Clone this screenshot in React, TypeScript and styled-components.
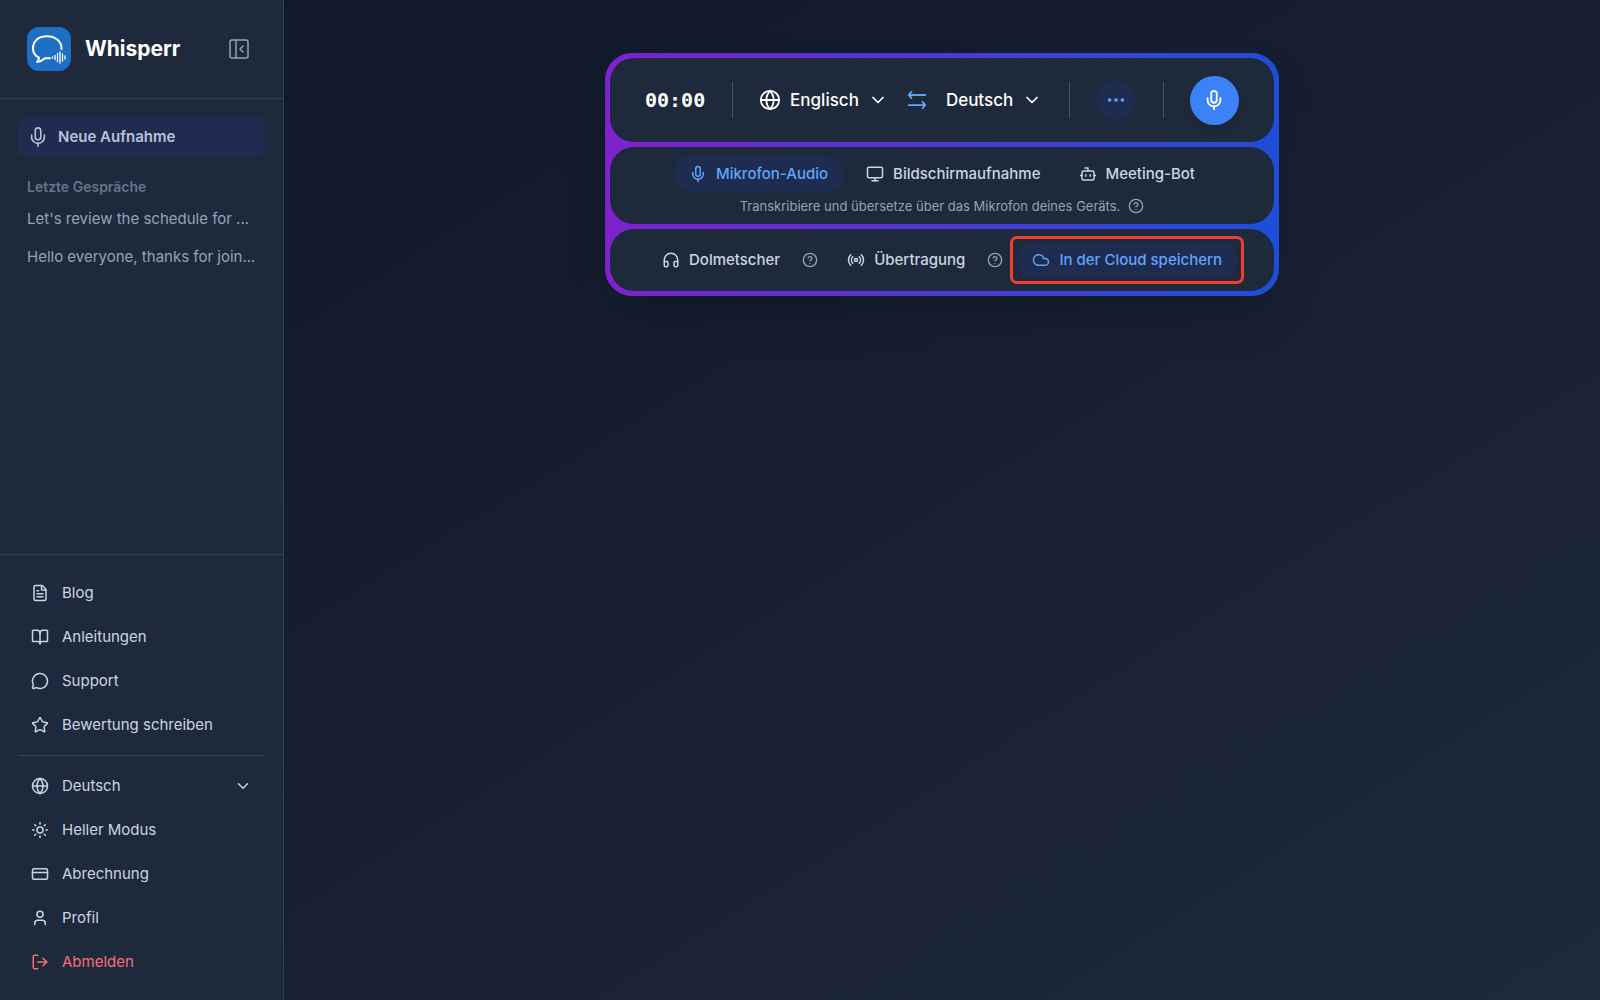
import React from "react";
import styled, { createGlobalStyle, css } from "styled-components";
import {
  BookOpen, Bot, ChevronDown, CircleHelp, Cloud, CreditCard, Ellipsis,
  FileText, Globe, Headphones, LogOut, MessageCircle, Mic, Monitor, PanelLeftClose, Radio, Star, Sun, User,
} from "lucide-react";

const GlobalStyle = createGlobalStyle`
  *, *::before, *::after { box-sizing: border-box; }
  body {
    margin: 0;
    font-family: Inter, "Liberation Sans", sans-serif;
    font-size: 15px;
    line-height: 24px;
    color: #cbd5e1;
    background: #0f172a;
  }
  button { font: inherit; color: inherit; background: none; border: 0; padding: 0; cursor: pointer; }
  a { color: inherit; text-decoration: none; }
  h1, h2, p, ul { margin: 0; padding: 0; }
  ul { list-style: none; }
  svg { flex-shrink: 0; display: block; }
`;

const Page = styled.div`
  display: flex;
  min-height: 100vh;
  background: linear-gradient(to bottom right, #0f172a, #1e293b);
`;

const Sidebar = styled.aside`
  display: flex;
  flex-direction: column;
  flex: 0 0 284px;
  min-width: 0;
  background: #1e293b;
  border-right: 1px solid #334155;
`;

const Brand = styled.header`
  display: flex;
  align-items: center;
  height: 99px;
  padding: 0 32px 0 27px;
  border-bottom: 1px solid #334155;
`;

const BrandName = styled.h1`
  flex: 1;
  margin-left: 14px;
  font-size: 21px;
  line-height: 32px;
  font-weight: 700;
  color: #fff;
`;

const CollapseButton = styled.button`
  color: #94a3b8;
`;

const Recent = styled.div`
  flex: 1;
  padding: 18px;
`;

const NewRecording = styled.button`
  display: flex;
  align-items: center;
  gap: 9px;
  width: 100%;
  height: 40px;
  padding: 0 9px;
  border-radius: 8px;
  background: #232a50;
  color: #b4c3dc;
  font-weight: 600;
`;

const RecentTitle = styled.h2`
  padding: 20px 9px 3px;
  font-size: 14px;
  line-height: 20px;
  font-weight: 600;
  color: #64748b;
`;

const RecentLink = styled.a`
  display: block;
  padding: 7px 9px;
  overflow: hidden;
  text-overflow: ellipsis;
  white-space: nowrap;
  color: #94a3b8;
`;

const Footer = styled.nav`
  padding: 16px 18px;
  border-top: 1px solid #334155;
`;

const Rule = styled.hr`
  height: 1px;
  margin: 8px 0;
  border: 0;
  background: #334155;
`;

const footerItem = css<{ $danger?: boolean }>`
  display: flex;
  align-items: center;
  gap: 13px;
  width: 100%;
  height: 44px;
  padding: 0 13px;
  text-align: left;
  color: ${(p) => (p.$danger ? "#f87171" : "#cbd5e1")};
`;
const FooterLink = styled.a<{ $danger?: boolean }>`${footerItem}`;
const FooterButton = styled.button<{ $danger?: boolean }>`${footerItem}`;

const Grow = styled.span`
  flex: 1;
`;

const Main = styled.main`
  flex: 1;
  display: flex;
  justify-content: center;
  align-items: flex-start;
  padding: 53px 24px;
`;

const Recorder = styled.section`
  display: grid;
  gap: 5px;
  width: 100%;
  max-width: 674px;
  padding: 5px;
  border-radius: 27px;
  background: linear-gradient(to right, #7e22ce, #1d4ed8);
  box-shadow: 0 24px 48px -12px rgba(0, 0, 0, 0.25);
`;

const Panel = styled.div`
  display: flex;
  align-items: center;
  justify-content: center;
  border-radius: 24px;
  background: #1e293b;
`;

const ControlPanel = styled(Panel)`
  justify-content: space-between;
  min-height: 84px;
  padding: 0 35px;
`;

const SourcePanel = styled(Panel)`
  flex-direction: column;
  gap: 4px;
  padding: 9px 16px 8px;
`;

const OptionPanel = styled(Panel)`
  gap: 13px;
  padding: 13px 16px;
`;

const Timer = styled.time`
  font-family: "DejaVu Sans Mono", monospace;
  font-size: 20px;
  font-weight: 700;
  color: #fff;
`;

const Separator = styled.span`
  width: 1px;
  height: 36px;
  background: #475569;
`;

const Languages = styled.div`
  display: flex;
  align-items: center;
  gap: 18px;
`;

const LanguageButton = styled.button`
  display: flex;
  align-items: center;
  gap: 9px;
  font-size: 17px;
  font-weight: 500;
  color: #fff;
`;

const SwapButton = styled.button`
  color: #60a5fa;
`;

const RoundButton = styled.button<{ $primary?: boolean }>`
  display: grid;
  place-items: center;
  width: ${(p) => (p.$primary ? 49 : 40)}px;
  height: ${(p) => (p.$primary ? 49 : 40)}px;
  border-radius: 50%;
  color: ${(p) => (p.$primary ? "#fff" : "#60a5fa")};
  background: ${(p) => (p.$primary ? "#3b82f6" : "#1e2c50")};
  box-shadow: ${(p) => (p.$primary ? "0 4px 10px rgba(0, 0, 0, 0.12)" : "none")};
`;

const PillRow = styled.div`
  display: flex;
  align-items: center;
  gap: 6px;
`;

const Pill = styled.button<{ $active?: boolean }>`
  display: flex;
  align-items: center;
  gap: 9px;
  height: 36px;
  padding: 0 16px;
  border-radius: 18px;
  font-weight: 500;
  white-space: nowrap;
  color: ${(p) => (p.$active ? "#60a5fa" : "#cbd5e1")};
  background: ${(p) => (p.$active ? "#1e2c50" : "transparent")};
`;

const Hint = styled.p`
  display: flex;
  align-items: center;
  gap: 8px;
  font-size: 13px;
  line-height: 20px;
  color: #94a3b8;
`;

const HelpButton = styled.button`
  color: #94a3b8;
`;

const Highlight = styled.div`
  position: relative;

  &::after {
    content: "";
    position: absolute;
    inset: -6px;
    border: 3px solid #f43b30;
    border-radius: 7px;
    pointer-events: none;
  }
`;

function Logo() {
  return (
    <svg width="44" height="44" viewBox="0 0 44 44" fill="none" aria-hidden="true">
      <rect width="44" height="44" rx="12" fill="#1d6fc4" />
      <path
        d="M34.5 22c.3-7-5.500-12.700-14.500-12.700S6 14.500 6 21.300c0 4.300 2.200 7.600 6 9.300-.2 1.800-.9 3.200-2 4.400 3.200-.3 5.800-1.700 8-3.700h5"
        stroke="#fff" strokeWidth="2" strokeLinecap="round" strokeLinejoin="round"
      />
      <path
        d="M25.500 30v1M28 28.500v4M30.500 26.500v8M33 25v11M35.500 27v7M38 29v3"
        stroke="#fff" strokeWidth="1.300" strokeLinecap="round"
      />
    </svg>
  );
}

function SwapIcon() {
  return (
    <svg
      width="22" height="22" viewBox="0 0 24 24" fill="none" stroke="currentColor"
      strokeWidth="2" strokeLinecap="round" strokeLinejoin="round" aria-hidden="true"
    >
      <path d="M6 3 3 6.500l3 3.500M3 6.500h18M18 21l3-3.500-3-3.500M21 17.500H3" />
    </svg>
  );
}

function Help() {
  return <HelpButton aria-label="Hilfe"><CircleHelp size={16} /></HelpButton>;
}

const links = [
  { icon: FileText, label: "Blog" },
  { icon: BookOpen, label: "Anleitungen" },
  { icon: MessageCircle, label: "Support" },
  { icon: Star, label: "Bewertung schreiben" },
];

export default function App() {
  return (
    <Page>
      <GlobalStyle />
      <Sidebar>
        <Brand>
          <Logo />
          <BrandName>Whisperr</BrandName>
          <CollapseButton aria-label="Seitenleiste einklappen"><PanelLeftClose size={24} strokeWidth={1.5} /></CollapseButton>
        </Brand>
        <Recent>
          <NewRecording><Mic size={22} strokeWidth={1.75} />Neue Aufnahme</NewRecording>
          <RecentTitle>Letzte Gespräche</RecentTitle>
          <ul>
            <li><RecentLink href="#schedule">Let's review the schedule for ...</RecentLink></li>
            <li><RecentLink href="#hello">Hello everyone, thanks for join...</RecentLink></li>
          </ul>
        </Recent>
        <Footer>
          {links.map(({ icon: Icon, label }) => (
            <FooterLink key={label} href="#"><Icon size={18} />{label}</FooterLink>
          ))}
          <Rule />
          <FooterButton><Globe size={18} /><Grow>Deutsch</Grow><ChevronDown size={18} /></FooterButton>
          <FooterButton><Sun size={18} />Heller Modus</FooterButton>
          <FooterLink href="#"><CreditCard size={18} />Abrechnung</FooterLink>
          <FooterLink href="#"><User size={18} />Profil</FooterLink>
          <FooterButton $danger><LogOut size={18} />Abmelden</FooterButton>
        </Footer>
      </Sidebar>
      <Main>
        <Recorder>
          <ControlPanel>
            <Timer>00:00</Timer>
            <Separator />
            <Languages>
              <LanguageButton><Globe size={22} />Englisch<ChevronDown size={20} /></LanguageButton>
              <SwapButton aria-label="Sprachen tauschen"><SwapIcon /></SwapButton>
              <LanguageButton>Deutsch<ChevronDown size={20} /></LanguageButton>
            </Languages>
            <Separator />
            <RoundButton aria-label="Mehr"><Ellipsis size={22} /></RoundButton>
            <Separator />
            <RoundButton $primary aria-label="Aufnahme starten"><Mic size={22} /></RoundButton>
          </ControlPanel>
          <SourcePanel>
            <PillRow>
              <Pill $active><Mic size={18} />Mikrofon-Audio</Pill>
              <Pill><Monitor size={18} />Bildschirmaufnahme</Pill>
              <Pill><Bot size={18} />Meeting-Bot</Pill>
            </PillRow>
            <Hint>Transkribiere und übersetze über das Mikrofon deines Geräts. <Help /></Hint>
          </SourcePanel>
          <OptionPanel>
            <PillRow>
              <Pill><Headphones size={18} />Dolmetscher</Pill>
              <Help />
            </PillRow>
            <PillRow>
              <Pill><Radio size={18} />Übertragung</Pill>
              <Help />
            </PillRow>
            <Highlight><Pill $active><Cloud size={18} />In der Cloud speichern</Pill></Highlight>
          </OptionPanel>
        </Recorder>
      </Main>
    </Page>
  );
}
